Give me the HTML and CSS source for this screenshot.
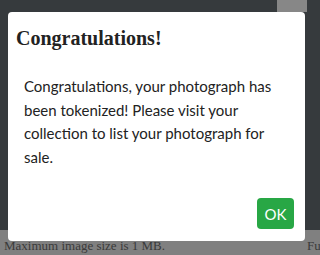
FILE: index.html
```html
<!DOCTYPE html>
<html>
<head>
<meta charset="utf-8">
<link rel="stylesheet" href="styles.css">
</head>
<body>
<div class="page">
  <div class="backdrop">
    <div class="tab"></div>
  </div>
  <div class="footer">
    <span class="hint">Maximum image size is 1 MB.</span>
    <span class="hint-right">Fu</span>
  </div>
</div>
<div class="modal">
  <div class="modal-header">
    <h5 class="modal-title">Congratulations!</h5>
  </div>
  <div class="modal-body">
    <p>Congratulations, your photograph has been tokenized! Please visit your collection to list your photograph for sale.</p>
  </div>
  <div class="modal-footer">
    <button class="btn-ok">OK</button>
  </div>
</div>
</body>
</html>
```

FILE: styles.css
```css
html, body {
  margin: 0;
  padding: 0;
  width: 320px;
  height: 255px;
  overflow: hidden;
}
.page {
  display: flex;
  flex-direction: column;
  height: 255px;
}
.backdrop {
  height: 230px;
  background: #363a3d;
  display: flex;
  justify-content: flex-end;
}
.tab {
  width: 30px;
  height: 12px;
  margin-right: 13px;
  background: #878787;
}
.footer {
  flex: 1;
  background: #808080;
  display: flex;
  justify-content: space-between;
  align-items: flex-start;
  padding: 8px 0 0 4px;
  font-family: "Liberation Serif", serif;
  font-size: 13px;
  line-height: 15px;
  color: #3a3a3a;
}
.hint-right {
  width: 13px;
  overflow: hidden;
  white-space: nowrap;
}
.modal {
  position: absolute;
  left: 8px;
  top: 12px;
  width: 297px;
  height: 229px;
  background: #fff;
  border-radius: 4px;
  display: flex;
  flex-direction: column;
}
.modal-header {
  padding: 13px 8px 0 8px;
}
.modal-title {
  margin: 0;
  font-family: "Liberation Serif", serif;
  font-weight: bold;
  font-size: 20px;
  line-height: 26px;
  color: #222;
}
.modal-body {
  padding: 0 16px;
  margin-top: 24px;
}
.modal-body p {
  margin: 0;
  font-family: "Lato", sans-serif;
  font-size: 15px;
  line-height: 23.5px;
  color: #222;
}
.modal-footer {
  margin-top: auto;
  display: flex;
  justify-content: flex-end;
  padding: 0 11px 12px 0;
}
.btn-ok {
  width: 37px;
  height: 31px;
  border: none;
  border-radius: 4px;
  background: #28a745;
  color: #fff;
  font-family: "Lato", sans-serif;
  font-size: 15px;
  padding: 0;
}
```
